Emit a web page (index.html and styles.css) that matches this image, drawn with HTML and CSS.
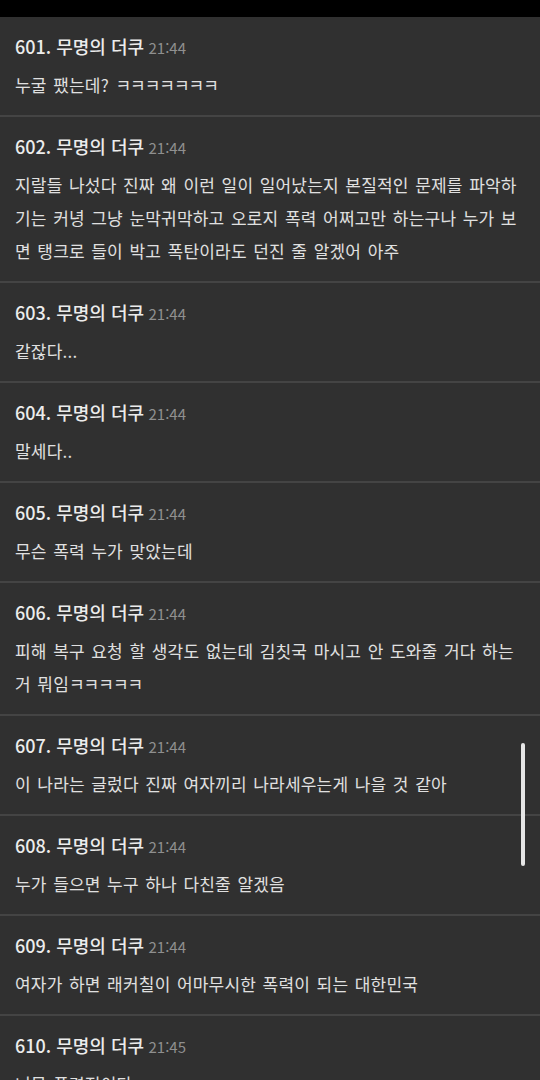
FILE: index.html
```html
<!DOCTYPE html>
<html lang="ko">
<head>
    <meta charset="UTF-8">
    <meta name="viewport" content="width=device-width, initial-scale=1.0">
    <title>댓글</title>
    <link rel="stylesheet" href="styles.css">
</head>
<body>
    <div class="status-bar"></div>
    <div class="comment-list">
        <div class="comment">
            <div class="comment-head"><span class="author">601. 무명의 더쿠</span> <span class="time">21:44</span></div>
            <p class="comment-body">누굴 팼는데? <span class="jamo">ㅋㅋㅋㅋㅋㅋㅋ</span></p>
        </div>
        <div class="comment">
            <div class="comment-head"><span class="author">602. 무명의 더쿠</span> <span class="time">21:44</span></div>
            <p class="comment-body">지랄들 나섰다 진짜 왜 이런 일이 일어났는지 본질적인 문제를 파악하기는 커녕 그냥 눈막귀막하고 오로지 폭력 어쩌고만 하는구나 누가 보면 탱크로 들이 박고 폭탄이라도 던진 줄 알겠어 아주</p>
        </div>
        <div class="comment">
            <div class="comment-head"><span class="author">603. 무명의 더쿠</span> <span class="time">21:44</span></div>
            <p class="comment-body">같잖다...</p>
        </div>
        <div class="comment">
            <div class="comment-head"><span class="author">604. 무명의 더쿠</span> <span class="time">21:44</span></div>
            <p class="comment-body">말세다..</p>
        </div>
        <div class="comment">
            <div class="comment-head"><span class="author">605. 무명의 더쿠</span> <span class="time">21:44</span></div>
            <p class="comment-body">무슨 폭력 누가 맞았는데</p>
        </div>
        <div class="comment">
            <div class="comment-head"><span class="author">606. 무명의 더쿠</span> <span class="time">21:44</span></div>
            <p class="comment-body">피해 복구 요청 할 생각도 없는데 김칫국 마시고 안 도와줄 거다 하는 거 뭐임<span class="jamo">ㅋㅋㅋㅋㅋ</span></p>
        </div>
        <div class="comment">
            <div class="comment-head"><span class="author">607. 무명의 더쿠</span> <span class="time">21:44</span></div>
            <p class="comment-body">이 나라는 글렀다 진짜 여자끼리 나라세우는게 나을 것 같아</p>
        </div>
        <div class="comment">
            <div class="comment-head"><span class="author">608. 무명의 더쿠</span> <span class="time">21:44</span></div>
            <p class="comment-body">누가 들으면 누구 하나 다친줄 알겠음</p>
        </div>
        <div class="comment">
            <div class="comment-head"><span class="author">609. 무명의 더쿠</span> <span class="time">21:44</span></div>
            <p class="comment-body">여자가 하면 래커칠이 어마무시한 폭력이 되는 대한민국</p>
        </div>
        <div class="comment">
            <div class="comment-head"><span class="author">610. 무명의 더쿠</span> <span class="time">21:45</span></div>
            <p class="comment-body">너무 폭력적이다</p>
        </div>
    </div>
    <div class="scroll-thumb"></div>
</body>
</html>
```

FILE: styles.css
```css
/* Page */
body {
    margin: 0;
    padding: 0;
    height: 1080px;
    overflow: hidden;
    background: #303030;
    font-family: 'Noto Sans CJK KR', 'Noto Sans', sans-serif;
    position: relative;
}

.status-bar {
    height: 17px;
    background: #000;
}

/* Comments */
.comment {
    padding: 14px 15px 14px 15px;
    border-bottom: 2px solid #444;
}

.comment-head {
    height: 30px;
    line-height: 30px;
    margin-bottom: 7px;
    white-space: nowrap;
}

.author {
    font-size: 18px;
    font-weight: 500;
    color: #ececec;
}

.time {
    font-size: 15px;
    color: #8f8f8f;
}

.comment-body {
    margin: 0;
    font-size: 17px;
    line-height: 33px;
    color: #e0e0e0;
    letter-spacing: 0.2px;
    word-spacing: 1.5px;
    word-break: break-all;
}

.comment-body .jamo {
    letter-spacing: -1px;
}

/* Scroll indicator */
.scroll-thumb {
    position: absolute;
    left: 521px;
    top: 743px;
    width: 4px;
    height: 123px;
    border-radius: 2px;
    background: #e6e6e6;
}
```
